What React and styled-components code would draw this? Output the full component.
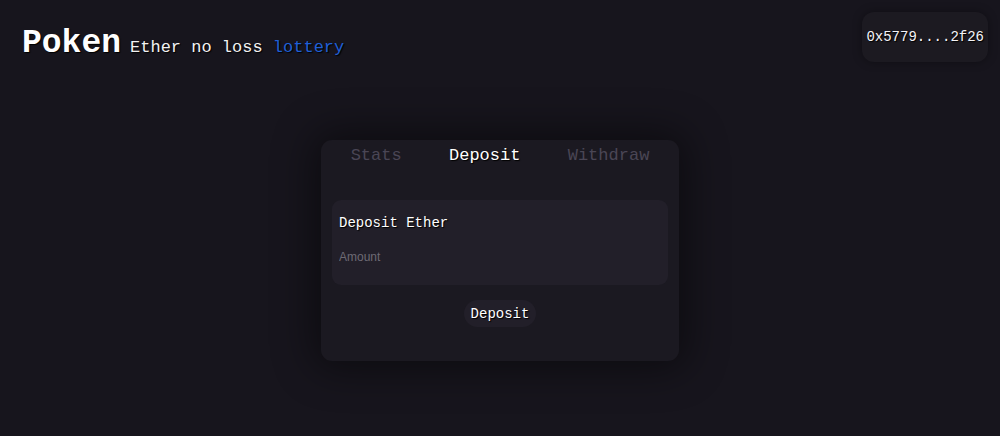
import React from 'react'
import styled, { createGlobalStyle } from 'styled-components'

const GlobalStyle = createGlobalStyle`
	html, body {
		margin: 0;
		padding: 0;
		background: #17151d;
		color: #f4f3f7;
		font-family: 'Liberation Mono', 'Courier New', monospace;
	}
	body {
		min-height: 436px;
	}
`

const Page = styled.div`
	min-height: 436px;
	display: flex;
	flex-direction: column;
`

const Header = styled.header`
	display: flex;
	justify-content: space-between;
	align-items: flex-start;
	padding: 12px 12px 0 22px;
`

const Brand = styled.div`
	display: flex;
	align-items: baseline;
	gap: 9px;
	margin-top: 15px;
	text-shadow: 1px 1px 1px #000;
`

const Logo = styled.h1`
	margin: 0;
	font-size: 33px;
	font-weight: 700;
	line-height: 1;
	color: #fff;
`

const Tagline = styled.span`
	font-size: 17px;
	color: #f2f2f2;
`

const Accent = styled.span`
	color: #1f5fd6;
`

const Wallet = styled.button`
	height: 50px;
	padding: 0 4px;
	border: none;
	border-radius: 12px;
	background: #1c1a21;
	color: #f4f3f7;
	font-family: inherit;
	font-size: 14px;
	text-shadow: 1px 1px 1px #000;
	box-shadow: 0 0 10px rgba(0, 0, 0, 0.35);
`

const Main = styled.main`
	display: flex;
	justify-content: center;
	margin-top: 78px;
`

const Card = styled.section`
	width: 358px;
	box-sizing: border-box;
	padding: 6px 11px 34px;
	border-radius: 11px;
	background: #1b1921;
	box-shadow: 0 0 40px 8px rgba(0, 0, 0, 0.45);
`

const Tabs = styled.nav`
	display: flex;
	justify-content: space-around;
	margin: 0 -5px;
`

const Tab = styled.button`
	border: none;
	background: none;
	padding: 0;
	font-family: inherit;
	font-size: 17px;
	line-height: 20px;
	color: ${p => (p.active ? '#ffffff' : '#4a4655')};
	text-shadow: ${p => (p.active ? '1px 1px 1px #000' : 'none')};
	cursor: pointer;
`

const Field = styled.div`
	margin-top: 34px;
	padding: 14px 7px 20px;
	border-radius: 9px;
	background: #221f29;
`

const Label = styled.div`
	font-size: 14px;
	line-height: 18px;
	color: #fff;
	text-shadow: 1px 1px 1px #000;
`

const Input = styled.input`
	display: block;
	width: 100%;
	margin-top: 17px;
	padding: 0;
	border: none;
	outline: none;
	background: transparent;
	color: #fff;
	font-family: 'Liberation Sans', Arial, sans-serif;
	font-size: 12px;
	line-height: 16px;
	&::placeholder {
		color: #6d6a74;
	}
`

const Actions = styled.div`
	display: flex;
	justify-content: center;
	margin-top: 15px;
`

const Button = styled.button`
	height: 27px;
	padding: 0 7px;
	border: none;
	border-radius: 14px;
	background: #221f29;
	color: #fff;
	font-family: inherit;
	font-size: 14px;
	text-shadow: 1px 1px 1px #000;
	cursor: pointer;
`

export default function App() {
	return (
		<Page>
			<GlobalStyle />
			<Header>
				<Brand>
					<Logo>Poken</Logo>
					<Tagline>
						Ether no loss <Accent>lottery</Accent>
					</Tagline>
				</Brand>
				<Wallet>0x5779....2f26</Wallet>
			</Header>
			<Main>
				<Card>
					<Tabs>
						<Tab>Stats</Tab>
						<Tab active>Deposit</Tab>
						<Tab>Withdraw</Tab>
					</Tabs>
					<Field>
						<Label>Deposit Ether</Label>
						<Input placeholder="Amount" />
					</Field>
					<Actions>
						<Button>Deposit</Button>
					</Actions>
				</Card>
			</Main>
		</Page>
	)
}
